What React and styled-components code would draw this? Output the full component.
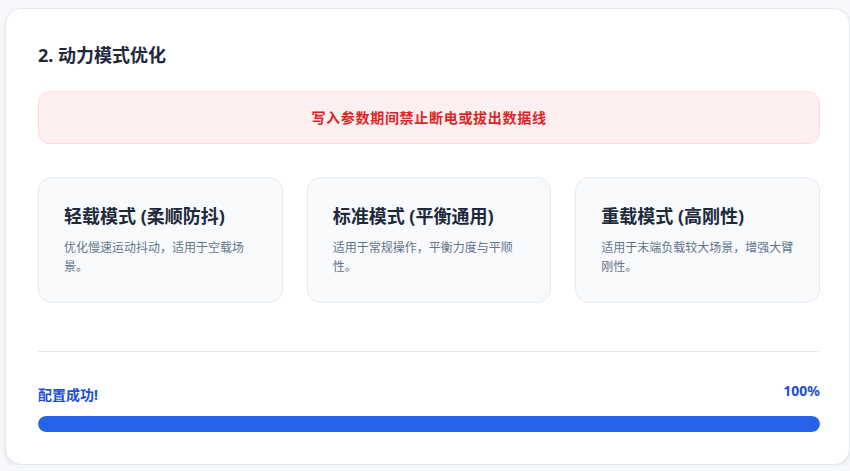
import React from "react"
import styled, {createGlobalStyle} from "styled-components";

const modes = [
    {title: "轻载模式 (柔顺防抖)", desc: "优化慢速运动抖动，适用于空载场景。"},
    {title: "标准模式 (平衡通用)", desc: "适用于常规操作，平衡力度与平顺性。"},
    {title: "重载模式 (高刚性)", desc: "适用于末端负载较大场景，增强大臂刚性。"},
]

const GlobalStyle = createGlobalStyle`
  html, body {
    margin: 0;
    background: #f6f8fb;
    font-family: "Noto Sans", "Noto Sans CJK SC", sans-serif;
    overflow: hidden;
  }
`

const App = () => {
    const progress = 100
    return (
        <Page>
            <GlobalStyle/>
            <Panel>
                <Heading>2. 动力模式优化</Heading>
                <Warning>写入参数期间禁止断电或拔出数据线</Warning>
                <ModeGrid>
                    {modes.map(m => (
                        <ModeCard key={m.title}>
                            <ModeTitle>{m.title}</ModeTitle>
                            <ModeDesc>{m.desc}</ModeDesc>
                        </ModeCard>
                    ))}
                </ModeGrid>
                <Divider/>
                <StatusRow>
                    <StatusLabel>配置成功!</StatusLabel>
                    <Percent>{progress}%</Percent>
                </StatusRow>
                <Track>
                    <Fill style={{width: `${progress}%`}}/>
                </Track>
            </Panel>
        </Page>
    )
}

export default App

const Page = styled.div`
  padding: 8px 0 0 5px;
`

const Panel = styled.section`
  box-sizing: border-box;
  width: 845px;
  background: #fff;
  border: 1px solid #e3e8ef;
  border-radius: 16px;
  box-shadow: 0 2px 4px rgba(15, 23, 42, 0.08);
  padding: 33px 29px 32px 32px;
`

const Heading = styled.h2`
  margin: 0;
  font-size: 18px;
  line-height: 27px;
  font-weight: 700;
  color: #1e293b;
`

const Warning = styled.div`
  margin-top: 22px;
  background: #fef0f0;
  border: 1px solid #fcdcdc;
  border-radius: 12px;
  padding: 15px 16px;
  text-align: center;
  color: #dc2626;
  font-size: 14px;
  line-height: 21px;
  font-weight: 700;
  letter-spacing: 0.7px;
`

const ModeGrid = styled.div`
  margin-top: 33px;
  display: grid;
  grid-template-columns: repeat(3, 1fr);
  gap: 24px;
`

const ModeCard = styled.div`
  background: #f8fafc;
  border: 1px solid #e6ebf1;
  border-radius: 14px;
  padding: 25px 24px 26px 25px;
`

const ModeTitle = styled.h3`
  margin: 0;
  font-size: 18px;
  line-height: 27px;
  font-weight: 700;
  color: #1e293b;
`

const ModeDesc = styled.p`
  margin: 8px 0 0;
  font-size: 12px;
  line-height: 19px;
  color: #64748b;
`

const Divider = styled.hr`
  margin: 48px 0 0;
  border: 0;
  border-top: 1px solid #e2e8f0;
`

const StatusRow = styled.div`
  margin-top: 29px;
  height: 24px;
  display: flex;
  justify-content: space-between;
  color: #1d4ed8;
  font-weight: 700;
`

const StatusLabel = styled.span`
  align-self: flex-end;
  font-size: 14px;
  line-height: 20px;
`

const Percent = styled.span`
  align-self: flex-start;
  font-size: 14px;
  line-height: 20px;
`

const Track = styled.div`
  margin-top: 11px;
  height: 16px;
  border-radius: 8px;
  background: #e2e8f0;
  overflow: hidden;
`

const Fill = styled.div`
  height: 100%;
  border-radius: 8px;
  background: #2563eb;
`
